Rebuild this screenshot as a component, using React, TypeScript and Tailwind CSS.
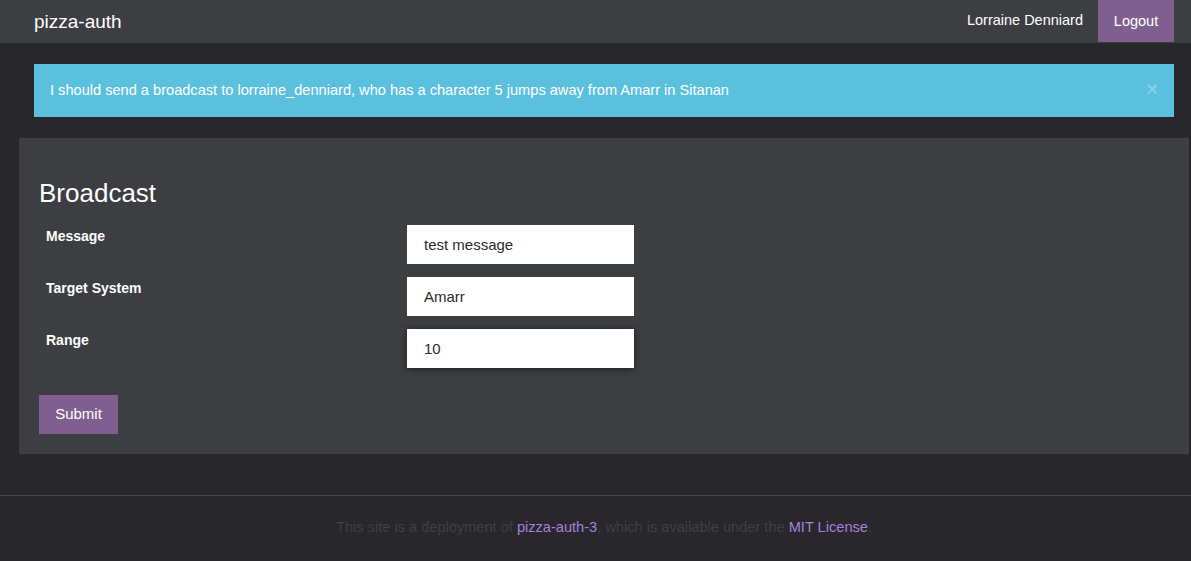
import { useState } from 'react'

const Field = ({ label, value, focused }: { label: string; value: string; focused?: boolean }) => {
  const [val, setVal] = useState(value)
  return (
    <div className="flex items-start">
      <label className="w-[368px] pl-[7px] pt-[1px] text-[14px] leading-[20px] font-bold text-white">{label}</label>
      <input
        value={val}
        onChange={e => setVal(e.target.value)}
        autoFocus={focused}
        className={`w-[227px] h-[39px] bg-white px-[17px] text-[15px] text-[#2b2b2b] caret-black outline-none ${focused ? 'shadow-[0_1px_7px_rgba(0,0,0,0.55)]' : ''}`}
      />
    </div>
  )
}

export default function App() {
  const [showAlert, setShowAlert] = useState(true)

  return (
    <div className="min-h-[561px] bg-[#28272b] font-['Liberation_Sans',Arial,sans-serif]">
      {/* Navbar */}
      <nav className="h-[43px] bg-[#3d3e42] flex items-start pl-[34px] pr-[17px]">
        <a className="text-[19px] leading-[43px] text-white h-[43px] flex items-center pb-[1px]">pizza-auth</a>
        <div className="ml-auto flex items-start">
          <span className="text-[14.5px] text-white h-[42px] flex items-center pr-[15px] pb-[1px]">Lorraine Denniard</span>
          <button className="h-[42px] w-[76px] bg-[#7e5f8f] text-white text-[14.5px] flex items-center justify-center pt-[2px]">Logout</button>
        </div>
      </nav>

      {/* Alert */}
      <div className="pl-[34px] pr-[17px] pt-[21px] pb-[21px]">
        {showAlert ? (
          <div className="relative bg-[#5bc0de] h-[53px] flex items-center pl-[16px] pr-[40px]">
            <span className="text-[14.6px] text-white pt-[1px]">
              I should send a broadcast to lorraine_denniard, who has a character 5 jumps away from Amarr in Sitanan
            </span>
            <button
              onClick={() => setShowAlert(false)}
              className="absolute right-[16px] top-[15px] text-[20px] leading-[20px] font-bold text-white/25"
            >
              ×
            </button>
          </div>
        ) : (
          <div className="h-[53px]" />
        )}
      </div>

      {/* Panel */}
      <div className="ml-[19px] mr-[2px] bg-[#3d3e42] pt-[41px] px-[20px] pb-[20px]">
        <h2 className="text-[26px] leading-[29px] text-white mb-[17px]">Broadcast</h2>
        <form className="flex flex-col gap-[13px]" onSubmit={e => e.preventDefault()}>
          <Field label="Message" value="test message" />
          <Field label="Target System" value="Amarr" />
          <Field label="Range" value="10" focused />
          <div className="pt-[14px]">
            <button type="submit" className="h-[39px] w-[79px] bg-[#7e5f8f] text-white text-[15px]">Submit</button>
          </div>
        </form>
      </div>

      {/* Footer */}
      <footer className="mt-[41px] border-t border-[#49484c] pt-[21px] pb-[24px] pl-[17px] text-center text-[14.6px] leading-[20px] text-[#3f3f44]">
        This site is a deployment of <a className="text-[#a183dc]">pizza-auth-3</a>, which is available under the{' '}
        <a className="text-[#a183dc]">MIT License</a>.
      </footer>
    </div>
  )
}
